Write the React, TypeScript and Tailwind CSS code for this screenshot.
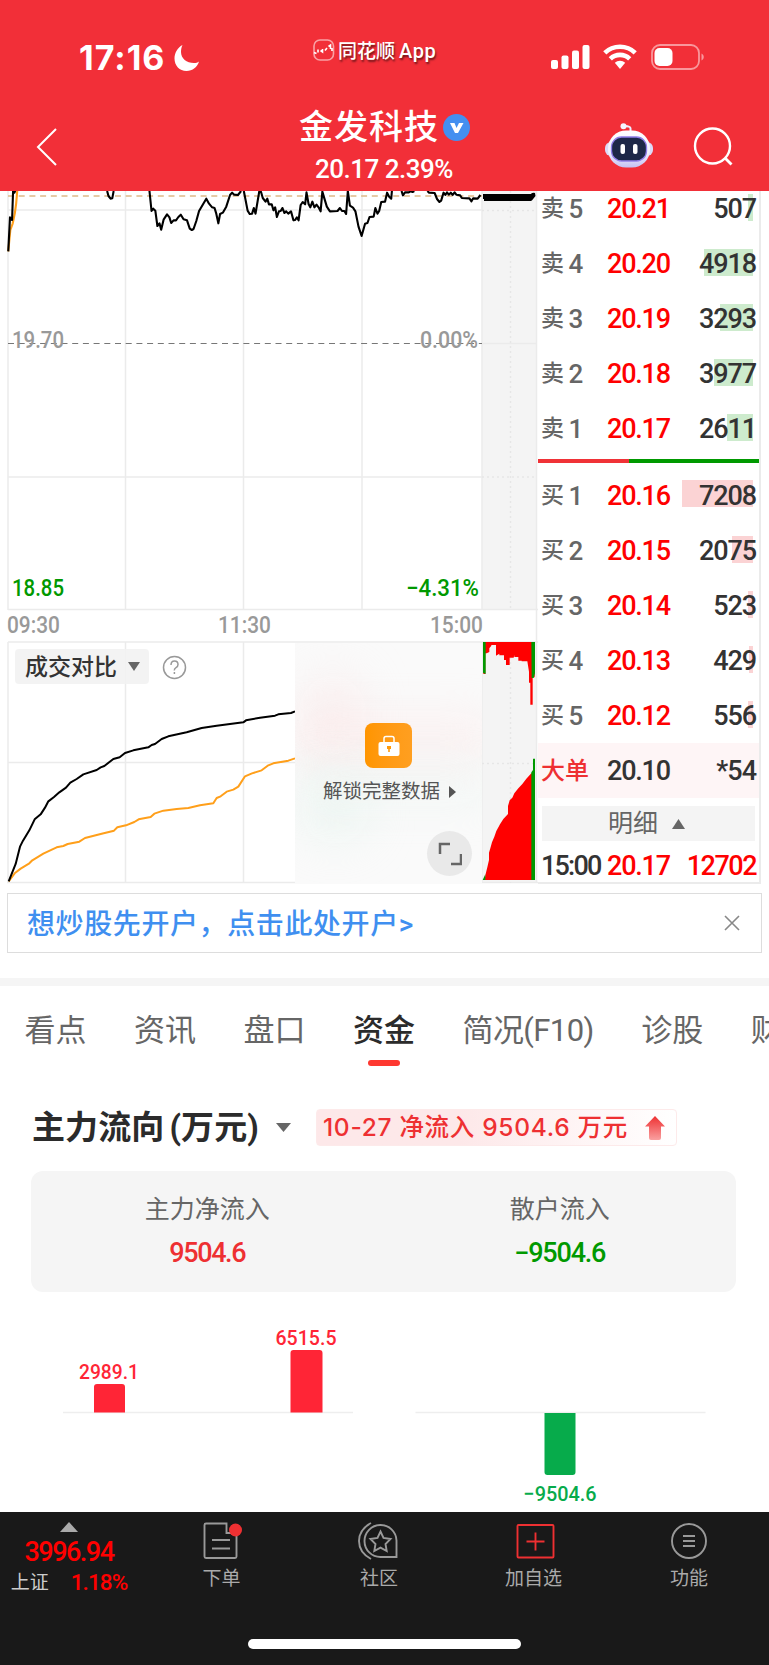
import type { ReactNode } from 'react';

type Order = { label: string; price: string; qty: string; bar: string };

const asks: Order[] = [
  { label: '卖5', price: '20.21', qty: '507', bar: 'w-[5px]' },
  { label: '卖4', price: '20.20', qty: '4918', bar: 'w-[49px]' },
  { label: '卖3', price: '20.19', qty: '3293', bar: 'w-[33px]' },
  { label: '卖2', price: '20.18', qty: '3977', bar: 'w-[39px]' },
  { label: '卖1', price: '20.17', qty: '2611', bar: 'w-[26px]' },
];

const bids: Order[] = [
  { label: '买1', price: '20.16', qty: '7208', bar: 'w-[71px]' },
  { label: '买2', price: '20.15', qty: '2075', bar: 'w-[21px]' },
  { label: '买3', price: '20.14', qty: '523', bar: 'w-[5px]' },
  { label: '买4', price: '20.13', qty: '429', bar: 'w-[4px]' },
  { label: '买5', price: '20.12', qty: '556', bar: 'w-[5px]' },
];

const tabs = ['看点', '资讯', '盘口', '资金', '简况(F10)', '诊股', '财务'];

function StatusBar() {
  return (
    <div className="flex h-[108px] items-start">
      <div className="flex w-[313px] items-center pl-[79px] pt-[38px]">
        <span className="w-[91px] whitespace-nowrap font-[Inter] text-[34px] font-bold leading-10 tracking-[1px]">17:16</span>
        <svg className="ml-[3px]" width="27" height="28" viewBox="0 0 26 28">
          <path d="M9 1C4 3.500 1 9 1 14.500C1 21.500 6 27 13 27c6 0 11-4 12.500-9.500C24 18.500 22.500 19 20.500 19 13 19 7.500 14.500 7.500 8c0-3 .5-5 1.500-7z" fill="#fff" />
        </svg>
      </div>
      <div className="flex w-[237px] items-center pt-[36px]">
        <svg width="22" height="24" viewBox="0 0 22 24" fill="none">
          <rect x="1" y="2" width="19.500" height="20" rx="6" stroke="#fff" strokeOpacity=".55" strokeWidth="1.600" />
          <path d="M1 14.500l2.500 1M5 14.500v-3M7.500 12.500l2 1.500v-3M12 12.500l2-2.500M15.500 8.500l2-1.500v4M19 10v3" stroke="#fff" strokeWidth="1.600" />
        </svg>
        <span className="ml-[3px] mt-[3px] whitespace-nowrap text-[19px] font-medium leading-6 [text-shadow:1px_2px_2px_rgba(0,0,0,0.55)]">
          同花顺<span className="ml-[4px] text-[20px] tracking-[0.6px]">App</span>
        </span>
      </div>
      <svg className="mt-[43px]" width="156" height="28" viewBox="0 0 156 28">
        <g fill="#fff">
          <rect x="1" y="17" width="7" height="9" rx="2" />
          <rect x="11.500" y="12.500" width="7" height="13.500" rx="2" />
          <rect x="22" y="7.500" width="7" height="18.500" rx="2" />
          <rect x="32.500" y="2" width="7" height="24" rx="2" />
        </g>
        <g fill="none" stroke="#fff" strokeWidth="4.600">
          <path d="M54.800 9.800a22 22 0 0 1 30.400 0" />
          <path d="M60.300 15.800a14 14 0 0 1 19.400 0" />
        </g>
        <path d="M64.800 19.800a7.500 7.500 0 0 1 10.400 0L70 26z" fill="#fff" />
        <rect x="102" y="2" width="47" height="24" rx="8" fill="none" stroke="#fff" strokeOpacity=".5" strokeWidth="1.800" />
        <rect x="104.500" y="5" width="18" height="18" rx="5" fill="#fff" />
        <path d="M151.500 10.500c3 1.500 3 5.500 0 7z" fill="#fff" fillOpacity=".5" />
      </svg>
    </div>
  );
}

function Header() {
  return (
    <header className="h-[191px] overflow-hidden bg-[#f22f38] text-white">
      <StatusBar />
      <div className="flex h-[83px]">
        <svg className="ml-[35px] mt-[19px]" width="24" height="40" viewBox="0 0 24 40" fill="none">
          <path d="M21 2L3 20l18 18" stroke="#fff" strokeWidth="2" />
        </svg>
        <div className="ml-[240px] w-[172px]">
          <div className="flex h-[39px] items-center">
            <h1 className="text-[34px] font-medium tracking-[1px]">金发科技</h1>
            <svg className="ml-[4px]" width="27" height="27" viewBox="0 0 27 27">
              <circle cx="13.500" cy="13.500" r="13.500" fill="#448ff0" />
              <path d="M7 9h4.500l2 5 2.500-5h4.500L15 19h-3z" fill="#fff" />
            </svg>
          </div>
          <div className="ml-[16px] whitespace-nowrap font-[Roboto] text-[26px] font-medium leading-[44px] tracking-[-0.5px]">20.17 2.39%</div>
        </div>
        <svg className="ml-[133px] mt-[15px]" width="50" height="46" viewBox="0 0 50 46">
          <defs>
            <linearGradient id="shell" x1="0" y1="0" x2="0" y2="1">
              <stop offset="0" stopColor="#fff" />
              <stop offset=".6" stopColor="#f1f0fd" />
              <stop offset="1" stopColor="#c4c1f2" />
            </linearGradient>
          </defs>
          <path d="M26.500 8V5.500q0-2.500-6-2.500" stroke="#eef" strokeWidth="2" fill="none" />
          <circle cx="19.500" cy="3.200" r="3" fill="#f5f5ff" />
          <rect x="1" y="19" width="48" height="14" rx="6" fill="#dcdaf8" />
          <rect x="4" y="7.500" width="42" height="37" rx="18" fill="url(#shell)" />
          <rect x="7.500" y="14" width="35" height="24" rx="10" fill="#1e2848" stroke="#8f7de8" strokeWidth="1.300" />
          <rect x="16.500" y="21" width="4.500" height="10" rx="2" fill="#fff" />
          <rect x="29" y="21" width="4.500" height="10" rx="2" fill="#fff" />
        </svg>
        <svg className="ml-[39px] mt-[18px]" width="42" height="42" viewBox="0 0 42 42" fill="none" stroke="#fff" strokeWidth="2.400">
          <circle cx="19.500" cy="20" r="17.500" />
          <path d="M32 32l6.500 6.500" strokeWidth="2.800" />
        </svg>
      </div>
    </header>
  );
}

function PriceChart() {
  return (
    <svg className="block font-[Roboto]" width="538" height="450" viewBox="0 191 538 450" fill="none">
      <rect x="482" y="191" width="55" height="418" fill="#f4f4f4" />
      <g stroke="#ebebeb" strokeWidth="1.500">
        <path d="M8 191V610M125.500 191V609M243.500 191V609M362 191V609M482 191V610M536.500 191V641" />
        <path d="M8 210H482M8 477H482M8 609.500H538M482 343.500H536" />
        <path d="M482 210.500H536M482 477H536M510.500 191V609" stroke="#e6e6e6" strokeDasharray="2 3" />
      </g>
      <path d="M8 196H482" stroke="#deb988" strokeWidth="1.500" strokeDasharray="6 4.700" />
      <path d="M8 343.500H482" stroke="#777" strokeDasharray="6 4.700" />
      <g transform="translate(0 180) scale(.34439 .33333)" strokeWidth="2.100" strokeLinejoin="round">
        <path vectorEffect="non-scaling-stroke" stroke="#ff9f1a" d="M24 214L30 150L37 130L43 100L47 70L50 33" />
        <path
          vectorEffect="non-scaling-stroke"
          stroke="#000"
          d="M24 214L29 112L35 120L38 33L42 38L45 30M311 33L315 48L321 56L326 55L330 33M434 33L440 93L445 86L451 92L457 138L463 130L468 149L475 119L485 103L492 112L497 129L504 121L511 121L518 111L525 104L533 118L543 121L551 146L557 150L562 147L570 123L578 93L590 72L599 56L607 71L616 82L623 84L628 101L634 130L639 102L647 98L657 80L668 45L674 38L680 44L691 45L700 33M708 33L719 92L725 102L732 101L737 84L742 101L753 33L758 36L763 54L771 65L776 56L781 73L789 73L794 91L799 82L804 111L810 94L815 93L820 84L826 99L831 94L837 101L845 94L852 121L857 120L862 112L867 121L873 75L879 66L886 73L890 37L896 72L901 82L907 65L913 82L919 74L925 82L931 94L936 35L942 56L949 80L958 94L980 93L987 84L993 93L1000 93L1005 102L1010 33L1016 77L1025 83L1032 94L1041 140L1050 168L1060 131L1067 129L1073 111L1085 110L1090 84L1096 101L1101 93L1107 66L1118 65L1124 38L1130 50L1136 56L1138 33M1166 33L1170 46L1176 37L1187 37L1192 34L1198 36L1203 33M1241 33L1246 38L1262 39L1269 57L1276 66L1281 62L1288 38L1293 45L1298 37L1303 44L1309 38L1314 45L1320 37L1325 44L1336 46L1341 54L1363 55L1369 64L1374 55L1387 56L1395 45"
        />
      </g>
      <path d="M484 197.500H531" stroke="#000" strokeWidth="7" />
      <path d="M483 194h4v5h-4zM529 197q2-5 6-4l.5 3-4 5z" fill="#000" />
      <g fontSize="23" fill="#999" fontWeight="500">
        <text x="12" y="347.500" textLength="52" lengthAdjust="spacingAndGlyphs">19.70</text>
        <text x="420" y="347.500" textLength="58" lengthAdjust="spacingAndGlyphs">0.00%</text>
        <text x="7" y="633" textLength="53" lengthAdjust="spacingAndGlyphs">09:30</text>
        <text x="218" y="633" textLength="53" lengthAdjust="spacingAndGlyphs">11:30</text>
        <text x="430" y="633" textLength="53" lengthAdjust="spacingAndGlyphs">15:00</text>
      </g>
      <g fontSize="23" fill="#009900" fontWeight="500">
        <text x="12" y="596" textLength="52" lengthAdjust="spacingAndGlyphs">18.85</text>
        <text x="406" y="596" textLength="73" lengthAdjust="spacingAndGlyphs">−4.31%</text>
      </g>
    </svg>
  );
}

function VolumeChart() {
  return (
    <div className="relative h-[243px]">
      <svg className="block" width="538" height="243" viewBox="0 641 538 243" fill="none">
        <rect x="482" y="642" width="55" height="241" fill="#f4f4f4" />
        <g stroke="#ebebeb" strokeWidth="1.500">
          <path d="M8 642V883M125.500 642V883M243.500 642V883M482 642V883M536.500 641V883" />
          <path d="M8 642H538M8 762.500H482M7 882.500H538" />
          <path d="M482 763.500H536M510.500 642V883" stroke="#e6e6e6" strokeDasharray="2 3" />
        </g>
        <g transform="translate(0 570) scale(.33333)" strokeWidth="6" strokeLinejoin="round">
          <path stroke="#ff9f1a" d="M26 934L44 910L62 896L88 880L97 871L130 851L170 832L190 828L203 822L238 815L255 804L305 791L342 782L352 772L378 766L403 756L416 748L452 741L463 731L490 722L530 717L565 714L600 706L640 700L650 684L662 679L680 665L700 659L715 650L735 619L756 610L785 601L803 587L820 580L865 572L885 565" />
          <path stroke="#000" d="M26 934L47 882L60 830L69 812L88 781L104 748L122 733L135 713L145 694L162 681L178 667L198 653L211 638L230 627L250 613L290 600L302 592L313 588L340 567L359 562L375 549L400 541L445 532L455 525L465 522L485 507L505 499L560 487L605 474L650 467L730 457L738 451L780 443L825 437L835 433L873 429L885 424" />
        </g>
        <g transform="translate(290 630) scale(.33333)">
          <path fill="#f00" d="M580 36H734V142L728 142V224H721V158H717V125L712 94H695V92H685V81H673V75L671 83H659V105H648V90H642V76H628V71L618 77V45H604V47L598 55V66L590 70H586V132H580z" />
          <path fill="#f00" d="M584 750L586 736L592 712L597 690V668L601 655L606 637L613 620L619 603L630 583L640 567L654 552V528L659 511L667 503L673 490L685 475L697 462L709 446L724 430H729V750z" />
          <path fill="#090" d="M579 36H587V132L579 128zM724 36H735V130L731 144H725zM729 386H735V750H724V427L729 420zM578 750L586 733V750z" />
        </g>
      </svg>
      <div className="absolute left-[15px] top-[8px] flex h-[35px] w-[134px] items-center rounded bg-[#f2f2f2]/90 pl-[10px]">
        <span className="mt-[3px] text-[23px] font-medium text-[#333]">成交对比</span>
        <svg className="ml-[11px]" width="12" height="9" viewBox="0 0 12 9"><path d="M0 0h12L6 9z" fill="#666" /></svg>
      </div>
      <svg className="absolute left-[162px] top-[14px]" width="25" height="25" viewBox="0 0 25 25" fill="none" stroke="#999" strokeWidth="1.500">
        <circle cx="12.500" cy="12.500" r="11" />
        <path d="M9 10q0-4 3.500-4T16 9.500q0 2-2 3.200t-1.600 2.800M12.400 17v2" />
      </svg>
      <div className="absolute left-[295px] top-[2px] flex h-[240px] w-[187px] flex-col items-center overflow-hidden bg-[#fafafa]">
        <div className="absolute left-[10px] top-[32px] h-[80px] w-[55px] rounded-full bg-[#fce6e6]/50 blur-xl" />
        <div className="absolute left-[0px] top-[80px] h-[30px] w-[200px] bg-[#fde5e5]/60 blur-xl" />
        <div className="absolute left-[10px] top-[140px] h-[55px] w-[60px] rounded-full bg-[#e2f3ec]/60 blur-xl" />
        <div className="absolute left-[0px] top-[130px] h-[24px] w-[200px] bg-[#e6f3ef]/60 blur-xl" />
        <div className="relative mt-[80px] flex h-[45px] w-[47px] items-center justify-center rounded-lg bg-gradient-to-r from-[#ff9500] to-[#ff9f20]">
          <svg width="22" height="22" viewBox="0 0 22 22" fill="none">
            <path d="M6 8V3.500Q6 1.500 8 1.500h6q2 0 2 2V8" stroke="#fff" strokeWidth="1.500" />
            <rect x=".5" y="7" width="21" height="14" rx="2" fill="#fff" />
            <path d="M9 11h4v3h-1.200v3h-1.600v-3H9z" fill="#ff9a0a" />
          </svg>
        </div>
        <div className="relative mt-[10px] flex items-center pl-0.5">
          <span className="whitespace-nowrap text-[19.500px] leading-7 text-[#555]">解锁完整数据</span>
          <svg className="ml-[9px]" width="7" height="12" viewBox="0 0 7 12"><path d="M0 0l7 6-7 6z" fill="#555" /></svg>
        </div>
      </div>
      <div className="absolute left-[427px] top-[190px] flex size-[45px] items-center justify-center rounded-full bg-[#e9e9e9]">
        <svg width="24" height="24" viewBox="0 0 24 24" fill="none" stroke="#666" strokeWidth="2.500">
          <path d="M2 12V2h10M13 22h10V12" />
        </svg>
      </div>
    </div>
  );
}

function OrderRow({ order, color }: { order: Order; color: string }) {
  return (
    <div className="relative flex h-[55.100px] shrink-0 items-center px-[4px] pt-[2px] font-medium">
      <div className={`absolute right-[6px] top-[13px] h-[27px] ${color} ${order.bar}`} />
      <span className="-ml-px w-[27.500px] text-[23px] text-[#666]">{order.label[0]}</span>
      <span className="w-[38.500px] font-[Roboto] text-[26px] text-[#666]">{order.label[1]}</span>
      <span className="relative font-[Roboto] text-[27px] tracking-[-1.200px] text-[#f00]">{order.price}</span>
      <span className="relative -mr-px ml-auto font-[Roboto] text-[27px] tracking-[-1.100px] text-[#333]">{order.qty}</span>
    </div>
  );
}

function OrderBook() {
  return (
    <div className="flex h-[693px] w-[223px] flex-col overflow-hidden border-b-2 border-r-2 border-[#ebebeb]">
      <div className="-mt-[10.500px]">
        {asks.map((o) => <OrderRow key={o.label} order={o} color="bg-[#cdebcd]" />)}
      </div>
      <div className="mb-[4.500px] mt-[3px] flex h-[4px] shrink-0">
        <div className="w-[91px] bg-[#f03237]" />
        <div className="flex-1 bg-[#090]" />
      </div>
      {bids.map((o) => <OrderRow key={o.label} order={o} color="bg-[#fbd3d4]" />)}
      <div className="flex h-[55px] shrink-0 items-center bg-[#fef5f6] px-[4px] pt-[2px] text-[27px] font-medium text-[#333]">
        <span className="-ml-px w-[66px] text-[24px] text-[#ee3032]">大单</span>
        <span className="font-[Roboto] tracking-[-1.200px]">20.10</span>
        <span className="-mr-px ml-auto font-[Roboto] tracking-[-1px]">*54</span>
      </div>
      <div className="mx-1 mt-[8px] flex h-[35px] shrink-0 items-center bg-[#f4f4f4] pl-[66px] pt-px text-[25px] text-[#666]">
        明细
        <svg className="ml-[14px]" width="13" height="10" viewBox="0 0 13 10"><path d="M0 10h13L6.500 0z" fill="#666" /></svg>
      </div>
      <div className="flex h-[48px] shrink-0 items-center px-[4px] pt-[2px] font-[Roboto] text-[27px] font-medium text-[#f00]">
        <span className="-ml-px w-[66px] tracking-[-1.800px] text-[#333]">15:00</span>
        <span className="tracking-[-1.200px]">20.17</span>
        <span className="-mr-px ml-auto tracking-[-1.500px]">12702</span>
      </div>
    </div>
  );
}

function AdBanner() {
  return (
    <div className="ml-[7px] mt-[9px] flex h-[60px] w-[755px] items-center justify-between border-[1.500px] border-[#ddd] pl-[19px] pr-[21px]">
      <span className="mt-[3px] text-[28px] font-medium tracking-[0.6px] text-[#3f8ff0]">想炒股先开户，点击此处开户&gt;</span>
      <svg width="16" height="16" viewBox="0 0 16 16" stroke="#888" strokeWidth="1.600"><path d="M1 1l14 14M15 1L1 15" /></svg>
    </div>
  );
}

function Tabs() {
  return (
    <nav className="mt-[25px] flex h-[106px] gap-[47.500px] overflow-hidden border-t-8 border-[#f5f5f5] pl-[24.500px] text-[31px] text-[#666]">
      {tabs.map((tab) => (
        <div key={tab} className={`flex shrink-0 flex-col items-center pt-[22px] ${tab === '资金' ? 'font-medium text-[#2b2b2b]' : ''}`}>
          <span className={`whitespace-nowrap leading-[46px] ${tab === '简况(F10)' ? 'tracking-[-0.600px]' : ''}`}>{tab}</span>
          {tab === '资金' && <div className="mt-[6px] h-[6px] w-[32px] rounded-full bg-[#fe3830]" />}
        </div>
      ))}
    </nav>
  );
}

function Flow() {
  return (
    <section>
      <div className="flex h-[87px] items-center pl-[32px]">
        <h2 className="w-[228px] whitespace-nowrap text-[33px] font-bold tracking-[0.1px] text-[#2b2b2b]">
          主力流向<span className="ml-[5px]">(万元)</span>
        </h2>
        <svg className="ml-[16px]" width="15" height="9" viewBox="0 0 15 9"><path d="M0 0h15L7.500 9z" fill="#666" /></svg>
        <div className="ml-[25px] flex h-[37px] w-[361px] items-center rounded border border-[#fdeaea] bg-gradient-to-r from-[#fde8e9] from-40% to-white pl-[6px]">
          <span className="w-[308px] whitespace-nowrap font-['Inter','Noto_Sans_CJK_SC',sans-serif] text-[24.500px] font-medium tracking-[0.700px] text-[#ee3032]">10-27 净流入 9504.6 万元</span>
          <svg className="ml-[14px]" width="20" height="24" viewBox="0 0 20 24">
            <defs>
              <linearGradient id="up" x1="0" y1="0" x2="0" y2="1">
                <stop stopColor="#ee3032" />
                <stop offset="1" stopColor="#f9a0a0" />
              </linearGradient>
            </defs>
            <path d="M10 0l10 10.500h-4V22q0 2-2 2H6q-2 0-2-2V10.500H0z" fill="url(#up)" />
          </svg>
        </div>
      </div>
      <div className="ml-[31px] flex h-[121px] w-[705px] rounded-xl bg-[#f5f5f5] text-center">
        <div className="flex-1 pt-[20px]">
          <div className="text-[25px] leading-[38px] text-[#666]">主力净流入</div>
          <div className="font-[Roboto] text-[27px] font-medium leading-[49px] tracking-[-1.400px] text-[#ee3032]">9504.6</div>
        </div>
        <div className="flex-1 pt-[20px]">
          <div className="text-[25px] leading-[38px] text-[#666]">散户流入</div>
          <div className="font-[Roboto] text-[27px] font-medium leading-[49px] tracking-[-1.200px] text-[#009900]">−9504.6</div>
        </div>
      </div>
      <svg className="block font-[Roboto]" width="769" height="220" viewBox="0 1292 769 220">
        <path d="M63 1412.500H353M415.500 1412.500H705.500" stroke="#eee" strokeWidth="1.500" />
        <path d="M94 1412.500V1387q0-3 3-3h25q3 0 3 3v25.500zM290.500 1412.500V1353q0-3 3-3h26q3 0 3 3v59.500z" fill="#ff2536" />
        <path d="M544.500 1413v59q0 3 3 3h25q3 0 3-3v-59z" fill="#07ab4b" />
        <g fontSize="21" fontWeight="500" textAnchor="middle">
          <text x="109" y="1378.500" fill="#ff2536" textLength="60" lengthAdjust="spacingAndGlyphs">2989.1</text>
          <text x="306" y="1344.500" fill="#ff2536" textLength="61" lengthAdjust="spacingAndGlyphs">6515.5</text>
          <text x="560" y="1501" fill="#07ab4b" textLength="73" lengthAdjust="spacingAndGlyphs">−9504.6</text>
        </g>
      </svg>
    </section>
  );
}

function NavItem({ label, className, children }: { label: string; className: string; children: ReactNode }) {
  return (
    <div className={`flex flex-col items-center ${className}`}>
      <svg className="mt-[8px]" width="42" height="42" viewBox="0 0 42 42" fill="none" stroke="#999" strokeWidth="1.900">
        {children}
      </svg>
      <span className="mt-[3px] text-[19px] leading-7 text-[#aaa]">{label}</span>
    </div>
  );
}

function BottomBar() {
  return (
    <footer className="flex h-[153px] flex-col bg-[#191919]">
      <div className="flex h-[127px]">
        <div className="flex w-[138px] flex-col items-center">
          <svg className="mt-[10px]" width="18" height="10" viewBox="0 0 18 10"><path d="M0 10h18L9 0z" fill="#aaa" /></svg>
          <span className="mt-[3px] font-[Roboto] text-[27px] font-medium leading-[34px] tracking-[-1.500px] text-[#f00]">3996.94</span>
          <div className="flex h-[26px] items-center gap-[22px] leading-[26px]">
            <span className="mt-[2px] text-[19px] text-[#ccc]">上证</span>
            <span className="font-[Roboto] text-[22.500px] font-medium tracking-[-0.900px] text-[#f00]">1.18%</span>
          </div>
        </div>
        <NavItem label="下单" className="w-[167px]">
          <path d="M25.500 3.500H5q-1.500 0-1.500 1.500v31.500q0 1.500 1.500 1.500h29q1.500 0 1.500-1.500V13h-10z" />
          <path d="M11 20h18M11 28.500h18" />
          <circle cx="34.500" cy="10" r="6.500" fill="#ee3032" stroke="none" />
        </NavItem>
        <NavItem label="社区" className="w-[148px]">
          <path d="M13 3Q1 9.500 1 21t12 18" />
          <path d="M38.500 37V20.500A16 16 0 1 0 22.500 37zM22.500 11.500l3 6.500 7 1-5 5 1.200 7L22.500 27.700 16.300 31l1.200-7-5-5 7-1z" />
        </NavItem>
        <NavItem label="加自选" className="w-[161px]">
          <g stroke="#ee3032">
            <rect x="4.500" y="5" width="36" height="32.500" rx="1" />
            <path d="M22.500 12.500v18M13.500 21.500h18" />
          </g>
        </NavItem>
        <NavItem label="功能" className="w-[150px]">
          <circle cx="21" cy="21" r="17" />
          <path d="M15 16h12M15 21h12M15 26h12" strokeWidth="2" />
        </NavItem>
      </div>
      <div className="mx-auto h-[10px] w-[273px] rounded-full bg-white" />
    </footer>
  );
}

export default function App() {
  return (
    <div className="h-[1665px] w-[769px] overflow-hidden bg-white font-['Roboto','Noto_Sans_CJK_SC',sans-serif]">
      <Header />
      <main>
        <div className="flex">
          <div className="w-[538px]">
            <PriceChart />
            <VolumeChart />
          </div>
          <OrderBook />
        </div>
        <AdBanner />
        <Tabs />
        <Flow />
      </main>
      <BottomBar />
    </div>
  );
}
